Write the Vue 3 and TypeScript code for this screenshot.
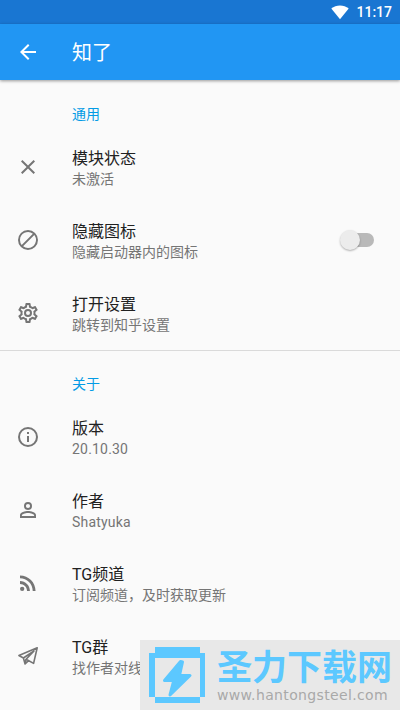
<script setup lang="ts">
interface Item {
  icon: string
  title: string
  summary: string
  toggle?: boolean
  latin?: boolean
}
interface Section {
  title: string
  items: Item[]
}

const sections: Section[] = [
  {
    title: '通用',
    items: [
      { icon: 'close', title: '模块状态', summary: '未激活' },
      { icon: 'block', title: '隐藏图标', summary: '隐藏启动器内的图标', toggle: true },
      { icon: 'settings', title: '打开设置', summary: '跳转到知乎设置' },
    ],
  },
  {
    title: '关于',
    items: [
      { icon: 'info', title: '版本', summary: '20.10.30', latin: true },
      { icon: 'person', title: '作者', summary: 'Shatyuka', latin: true },
      { icon: 'rss', title: 'TG频道', summary: '订阅频道，及时获取更新' },
      { icon: 'telegram', title: 'TG群', summary: '找作者对线' },
    ],
  },
]

const icons: Record<string, string> = {
  close: 'M19 6.41 17.59 5 12 10.59 6.41 5 5 6.41 10.59 12 5 17.59 6.41 19 12 13.41 17.59 19 19 17.59 13.41 12z',
  block: 'M12 2a10 10 0 1 0 0 20 10 10 0 0 0 0-20zM4 12a8 8 0 0 1 12.9-6.31L5.69 16.9A7.9 7.9 0 0 1 4 12zm8 8a7.9 7.9 0 0 1-4.9-1.69L18.31 7.1A8 8 0 0 1 12 20z',
  settings: 'M19.43 12.98c.04-.32.07-.64.07-.98s-.03-.66-.07-.98l2.11-1.65c.19-.15.24-.42.12-.64l-2-3.46a.5.5 0 0 0-.61-.22l-2.49 1c-.52-.4-1.08-.73-1.69-.98l-.38-2.65A.49.49 0 0 0 14 2h-4a.49.49 0 0 0-.49.42l-.38 2.65c-.61.25-1.17.59-1.69.98l-2.49-1a.5.5 0 0 0-.61.22l-2 3.46c-.13.22-.07.49.12.64l2.11 1.65c-.04.32-.07.65-.07.98s.03.66.07.98l-2.11 1.65c-.19.15-.24.42-.12.64l2 3.46c.12.22.39.3.61.22l2.49-1c.52.4 1.08.73 1.69.98l.38 2.65c.03.24.24.42.49.42h4c.25 0 .46-.18.49-.42l.38-2.65c.61-.25 1.17-.59 1.69-.98l2.49 1c.23.09.49 0 .61-.22l2-3.46c.12-.22.07-.49-.12-.64zm-1.98-1.71c.04.31.05.52.05.73s-.02.43-.05.73l-.14 1.13.89.7 1.08.84-.7 1.21-1.27-.51-1.04-.42-.9.68c-.43.32-.84.56-1.25.73l-1.06.43-.16 1.13-.2 1.35h-1.4l-.19-1.35-.16-1.13-1.06-.43c-.43-.18-.83-.41-1.23-.71l-.91-.7-1.06.43-1.27.51-.7-1.21 1.08-.84.89-.7-.14-1.13c-.03-.31-.05-.54-.05-.74s.02-.43.05-.73l.14-1.13-.89-.7-1.08-.84.7-1.21 1.27.51 1.04.42.9-.68c.43-.32.84-.56 1.25-.73l1.06-.43.16-1.13.2-1.35h1.39l.19 1.35.16 1.13 1.06.43c.43.18.83.41 1.23.71l.91.7 1.06-.43 1.27-.51.7 1.21-1.07.85-.89.7zM12 8a4 4 0 1 0 0 8 4 4 0 0 0 0-8zm0 6a2 2 0 1 1 0-4 2 2 0 0 1 0 4z',
  info: 'M11 7h2v2h-2zm0 4h2v6h-2zm1-9a10 10 0 1 0 0 20 10 10 0 0 0 0-20zm0 18a8 8 0 1 1 0-16 8 8 0 0 1 0 16z',
  person: 'M12 5.9a2.1 2.1 0 1 1 0 4.2 2.1 2.1 0 0 1 0-4.2m0 9c2.97 0 6.1 1.46 6.1 2.1v1.1H5.9V17c0-.64 3.13-2.1 6.1-2.1M12 4a4 4 0 1 0 0 8 4 4 0 0 0 0-8zm0 9c-2.67 0-8 1.34-8 4v3h16v-3c0-2.66-5.33-4-8-4z',
  rss: 'M6.18 15.64a2.18 2.18 0 1 1 0 4.36 2.18 2.18 0 0 1 0-4.36zM4 4.44v2.83c7.03 0 12.73 5.7 12.73 12.73h2.83c0-8.59-6.97-15.56-15.56-15.56zm0 5.66v2.83c3.9 0 7.07 3.17 7.07 7.07h2.83c0-5.47-4.43-9.9-9.9-9.9z',
}
</script>

<template>
  <div class="screen">
    <div class="status">
      <svg class="wifi" viewBox="0 0 18 15"><path d="M9 14.300 0.300 3.600C2.800 1.500 5.800.4 9 .4s6.200 1.100 8.700 3.200z" /></svg>
      <span>11:17</span>
    </div>
    <header class="bar">
      <svg class="back" viewBox="0 0 24 24"><path d="M20 11H7.830l5.590-5.590L12 4l-8 8 8 8 1.410-1.410L7.830 13H20z" /></svg>
      <h1>知了</h1>
    </header>
    <main>
      <section v-for="section in sections" :key="section.title">
        <h2>{{ section.title }}</h2>
        <div v-for="item in section.items" :key="item.title" class="row">
          <svg v-if="item.icon === 'telegram'" class="icon plane" viewBox="0 0 24 24">
            <path d="M21.200 3.700 2.900 11.500 7.400 14 18 6.900 10.100 15.200 17.600 19.400zM7.400 14l1.700 6 3.400-3.300M10.100 15.200l-1 4.800" />
          </svg>
          <svg v-else class="icon" viewBox="0 0 24 24"><path :d="icons[item.icon]" fill-rule="evenodd" /></svg>
          <div class="text">
            <div class="title">{{ item.title }}</div>
            <div class="summary" :class="{ latin: item.latin }">{{ item.summary }}</div>
          </div>
          <div v-if="item.toggle" class="switch"><span class="thumb"></span></div>
        </div>
      </section>
    </main>
    <aside class="mark">
      <svg class="logo" viewBox="0 0 56 56">
        <path d="M6 0h45v6h5v44h-5v6H6v-6H0V6h6zM6 11v39h45V11z" fill-rule="evenodd" />
        <path class="bolt" d="M31.500 14.500 15.500 33.500h9.300L21 48 41 28.500H30.500L33.500 15z" />
      </svg>
      <div class="brand">
        <div class="name">圣力下载网</div>
        <div class="url">www.hantongsteel.com</div>
      </div>
    </aside>
  </div>
</template>

<style>
body {
  margin: 0;
  overflow: hidden;
}
</style>

<style scoped>
.screen {
  position: relative;
  width: 400px;
  height: 710px;
  overflow: hidden;
  background: #fafafa;
  font-family: Roboto, "Noto Sans CJK SC", sans-serif;
}
.status {
  display: flex;
  align-items: center;
  justify-content: flex-end;
  box-sizing: border-box;
  height: 24px;
  padding-right: 8px;
  gap: 7px;
  background: #1976d2;
  color: #fff;
  font-size: 14px;
  font-weight: 500;
}
.wifi {
  width: 18px;
  height: 15px;
  fill: #fff;
}
.bar {
  position: relative;
  display: flex;
  align-items: center;
  height: 56px;
  padding-left: 16px;
  background: #2196f3;
  box-shadow: 0 1px 3px rgba(0, 0, 0, 0.4);
}
.back {
  width: 24px;
  height: 24px;
  margin-right: 32px;
  fill: #fff;
}
h1 {
  margin: 0;
  padding-top: 2px;
  color: #fff;
  font-size: 20px;
  font-weight: 400;
  line-height: 28px;
}
section + section {
  border-top: 1px solid #dadada;
}
h2 {
  box-sizing: border-box;
  height: 50px;
  margin: 0;
  padding: 23px 0 0 72px;
  color: #039be5;
  font-size: 14px;
  font-weight: 400;
  line-height: 20px;
}
section:first-child h2 {
  height: 51px;
  padding-top: 24px;
}
.row {
  display: flex;
  align-items: flex-start;
  box-sizing: border-box;
  height: 73px;
  padding: 0 26px 0 16px;
}
.icon {
  flex: none;
  width: 24px;
  height: 24px;
  margin: 24px 32px 0 0;
  fill: #757575;
}
.plane {
  fill: none;
  stroke: #757575;
  stroke-width: 1.6;
  stroke-linejoin: round;
}
.text {
  flex: 1;
  padding-top: 17px;
  white-space: nowrap;
}
.title {
  height: 21px;
  color: #212121;
  font-size: 16px;
  line-height: 21px;
}
.summary {
  height: 20px;
  color: #757575;
  font-size: 14px;
  line-height: 20px;
}
.latin {
  letter-spacing: 0.2px;
}
.switch {
  display: flex;
  align-items: center;
  width: 34px;
  height: 14px;
  margin-top: 29px;
  border-radius: 7px;
  background: linear-gradient(to right, transparent 10px, #b9b9b9 10px);
}
.thumb {
  width: 20px;
  height: 20px;
  border-radius: 50%;
  background: #ececec;
  box-shadow: 0 1px 2px rgba(0, 0, 0, 0.3);
}
.mark {
  position: absolute;
  right: 0;
  bottom: 0;
  display: flex;
  box-sizing: border-box;
  width: 260px;
  height: 70px;
  padding: 7px 0 0 9px;
  gap: 12px;
  background: #e8e8e8;
}
.logo {
  flex: none;
  width: 56px;
  height: 56px;
  fill: #5cc8ff;
}
.bolt {
  stroke: #5cc8ff;
  stroke-width: 3;
  stroke-linejoin: round;
}
.brand {
  white-space: nowrap;
}
.name {
  height: 39px;
  color: #5cc8ff;
  font-family: "Noto Sans CJK SC", sans-serif;
  font-size: 35px;
  font-weight: 700;
  line-height: 35px;
}
.url {
  color: #a9a9a9;
  font-family: "DejaVu Sans", sans-serif;
  font-size: 14px;
  line-height: 18px;
  letter-spacing: 0.35px;
}
</style>
